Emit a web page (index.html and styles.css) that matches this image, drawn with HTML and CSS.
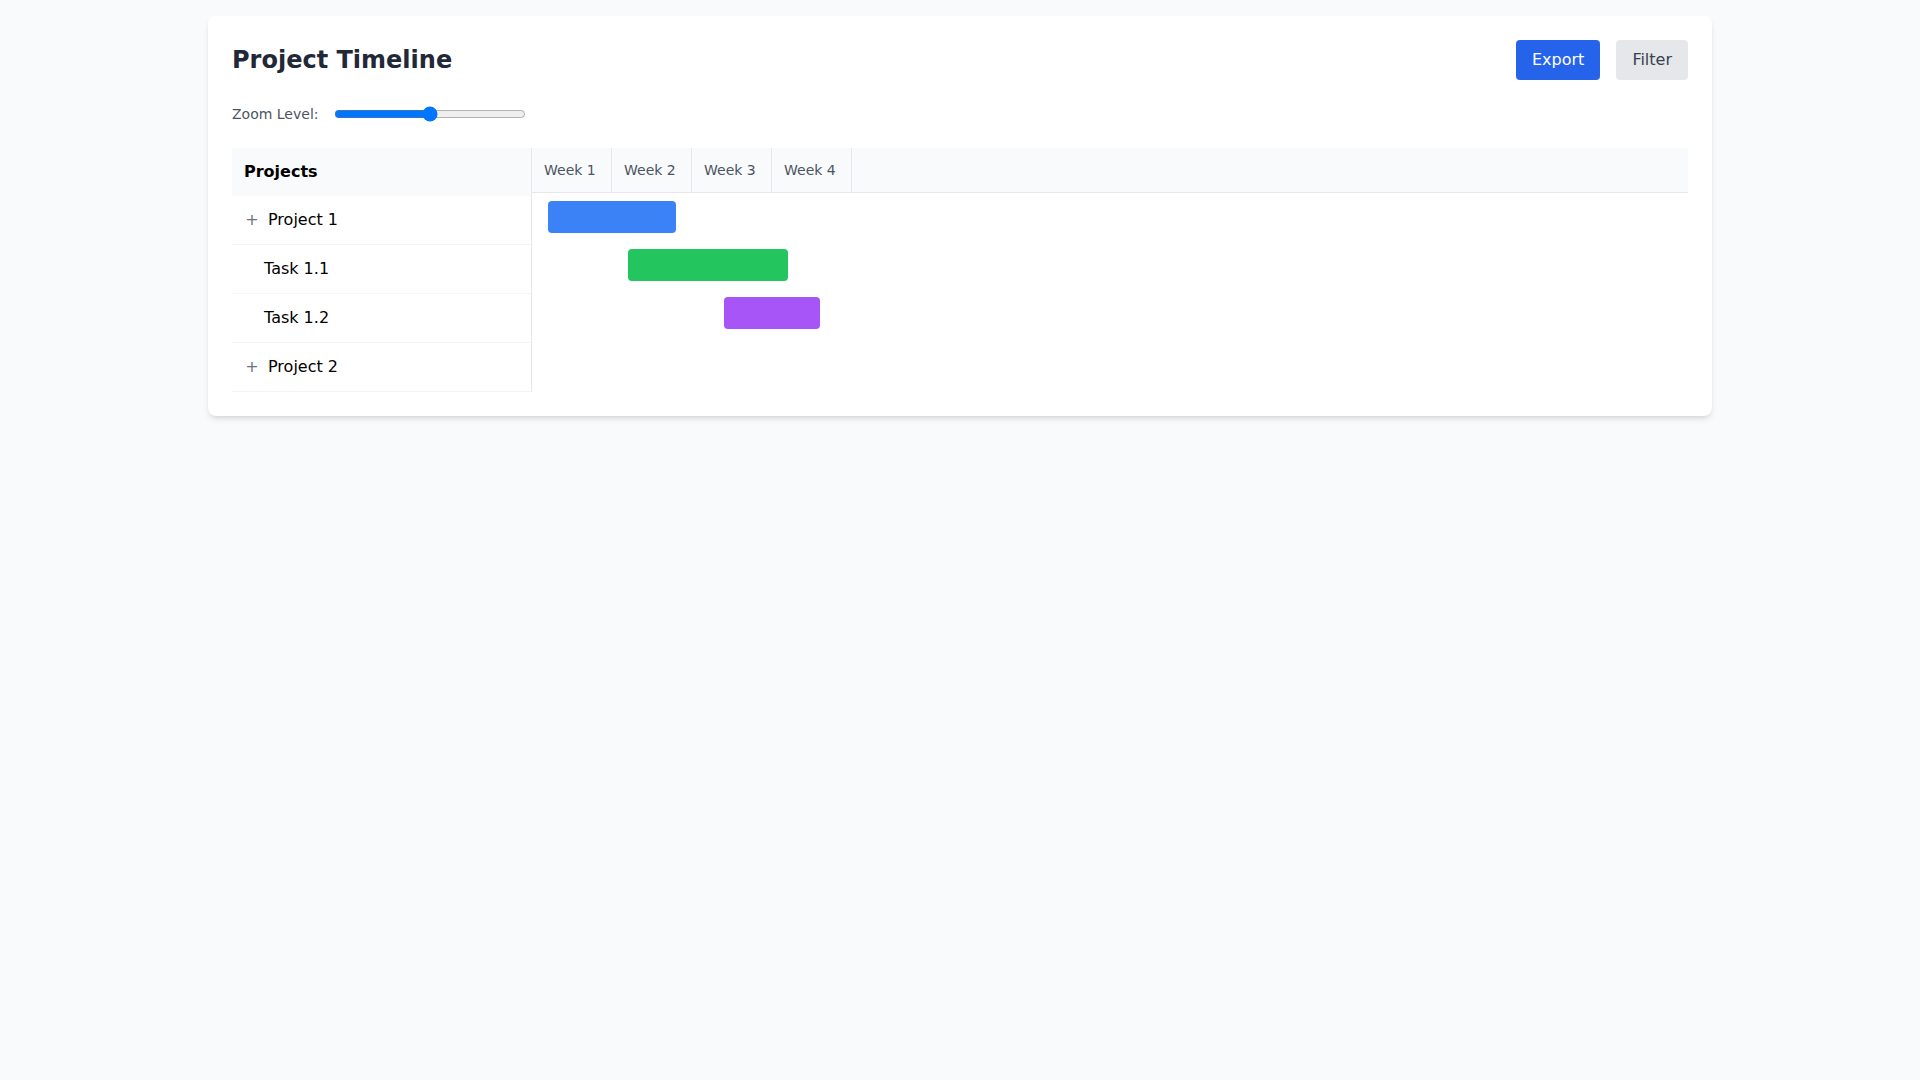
FILE: index.html
```html
<!DOCTYPE html>
<html lang="en">
<head>
  <meta charset="UTF-8">
  <meta name="viewport" content="width=device-width, initial-scale=1.0">
  <title>Project Timeline</title>
  <link rel="stylesheet" href="styles.css">
</head>
<body>
  <div class="page">
    <div class="card">
      <div class="header">
        <h1 class="title">Project Timeline</h1>
        <div class="actions">
          <button class="btn btn-primary">Export</button>
          <button class="btn btn-secondary">Filter</button>
        </div>
      </div>

      <div class="zoom">
        <label class="zoom-label" for="zoom">Zoom Level:</label>
        <input type="range" id="zoom" class="zoom-range" min="0" max="100" value="50">
      </div>

      <div class="gantt">
        <div class="tree">
          <div class="tree-head">Projects</div>
          <div class="tree-row"><span class="toggle">+</span>Project 1</div>
          <div class="tree-row task">Task 1.1</div>
          <div class="tree-row task">Task 1.2</div>
          <div class="tree-row"><span class="toggle">+</span>Project 2</div>
        </div>
        <div class="chart">
          <div class="weeks">
            <div class="week">Week 1</div>
            <div class="week">Week 2</div>
            <div class="week">Week 3</div>
            <div class="week">Week 4</div>
          </div>
          <div class="lane"><div class="bar bar-blue" style="margin-left: 16px; width: 128px;"></div></div>
          <div class="lane"><div class="bar bar-green" style="margin-left: 96px; width: 160px;"></div></div>
          <div class="lane"><div class="bar bar-purple" style="margin-left: 192px; width: 96px;"></div></div>
          <div class="lane"></div>
        </div>
      </div>
    </div>
  </div>
</body>
</html>
```

FILE: styles.css
```css
* {
  box-sizing: border-box;
}
body {
  margin: 0;
  font-family: "DejaVu Sans", sans-serif;
  background-color: #f9fafb;
  color: #000;
}
.page {
  max-width: 1536px;
  margin: 0 auto;
  padding: 16px;
}
.card {
  background-color: #fff;
  border-radius: 8px;
  box-shadow: 0 4px 6px -1px rgba(0, 0, 0, 0.1), 0 2px 4px -2px rgba(0, 0, 0, 0.1);
  padding: 24px;
}
.header {
  display: flex;
  justify-content: space-between;
  align-items: center;
  margin-bottom: 24px;
}
.title {
  margin: 0;
  font-size: 24px;
  line-height: 32px;
  font-weight: bold;
  color: #1f2937;
}
.actions {
  display: flex;
  gap: 16px;
}
.btn {
  font-family: inherit;
  font-size: 16px;
  line-height: 24px;
  padding: 8px 16px;
  border: none;
  border-radius: 4px;
  cursor: pointer;
}
.btn-primary {
  background-color: #2563eb;
  color: #fff;
}
.btn-secondary {
  background-color: #e5e7eb;
  color: #374151;
}
.zoom {
  display: flex;
  align-items: center;
  height: 20px;
  margin-bottom: 24px;
}
.zoom-label {
  font-size: 14px;
  line-height: 20px;
  color: #4b5563;
  margin-right: 16px;
}
.zoom-range {
  width: 192px;
  margin: 0;
}
.gantt {
  display: flex;
}
.tree {
  width: 300px;
  flex-shrink: 0;
  border-right: 1px solid #e5e7eb;
}
.tree-head {
  background-color: #f9fafb;
  padding: 12px;
  font-size: 16px;
  line-height: 24px;
  font-weight: bold;
}
.tree-row {
  display: flex;
  align-items: center;
  padding: 12px;
  font-size: 16px;
  line-height: 24px;
  border-bottom: 1px solid #f3f4f6;
}
.tree-row.task {
  padding-left: 32px;
}
.toggle {
  width: 16px;
  margin-right: 8px;
  text-align: center;
  color: #6b7280;
}
.chart {
  flex: 1;
}
.weeks {
  display: flex;
  background-color: #f9fafb;
  border-bottom: 1px solid #e5e7eb;
}
.week {
  width: 80px;
  padding: 12px;
  font-size: 14px;
  line-height: 20px;
  color: #4b5563;
  border-right: 1px solid #e5e7eb;
  white-space: nowrap;
}
.lane {
  height: 48px;
  padding: 8px 0;
}
.bar {
  height: 32px;
  border-radius: 4px;
}
.bar-blue {
  background-color: #3b82f6;
}
.bar-green {
  background-color: #22c55e;
}
.bar-purple {
  background-color: #a855f7;
}
```
